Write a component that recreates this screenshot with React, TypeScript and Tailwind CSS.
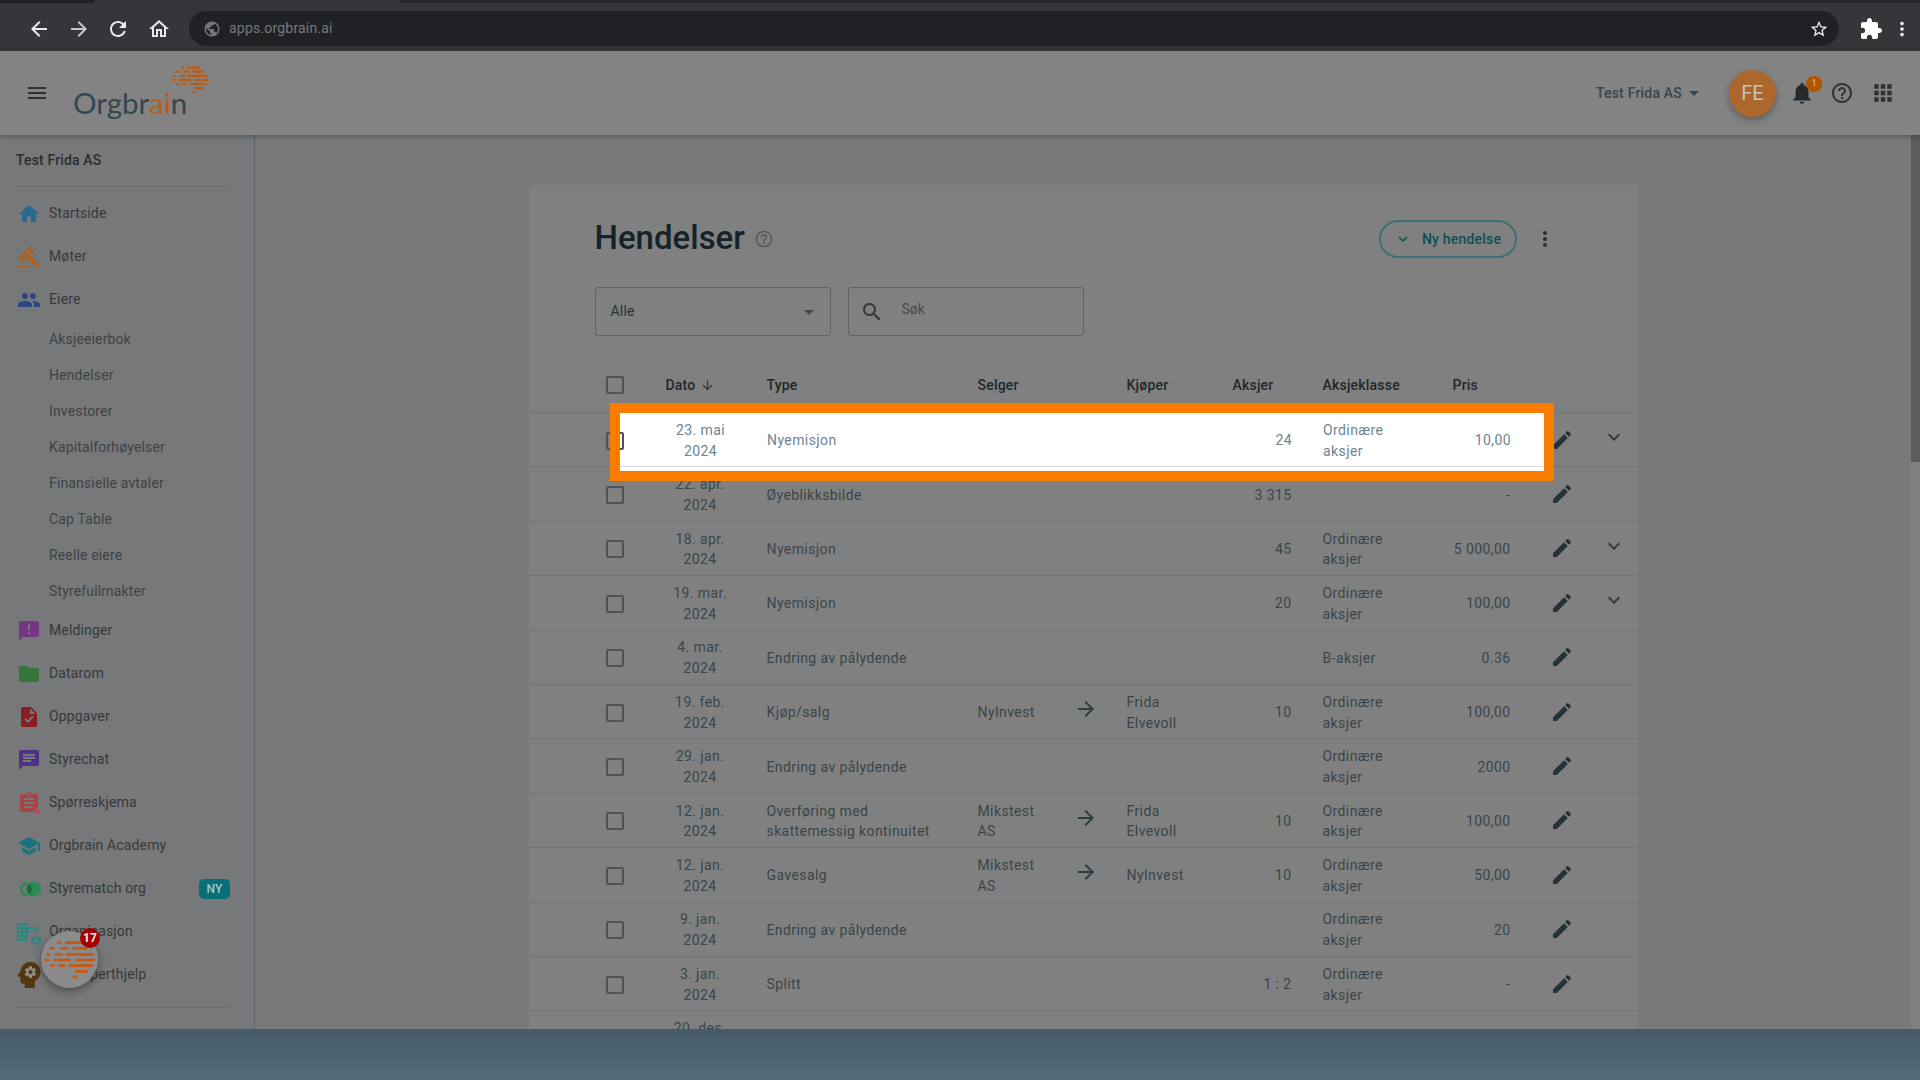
import React from "react";

const P = {
  back: "M20 11H7.83l5.59-5.59L12 4l-8 8 8 8 1.41-1.41L7.83 13H20v-2z",
  forward: "M12 4l-1.41 1.41L16.17 11H4v2h12.17l-5.58 5.59L12 20l8-8z",
  refresh: "M17.65 6.35C16.2 4.9 14.21 4 12 4c-4.42 0-7.99 3.58-7.99 8s3.57 8 7.99 8c3.73 0 6.84-2.55 7.73-6h-2.08c-.82 2.33-3.04 4-5.65 4-3.31 0-6-2.69-6-6s2.69-6 6-6c1.66 0 3.14.69 4.22 1.78L13 11h7V4l-2.35 2.35z",
  homeOutline: "M12 5.69l5 4.5V18h-2v-6H9v6H7v-7.81l5-4.5M12 3L2 12h3v8h6v-6h2v6h6v-8h3L12 3z",
  globe: "M12 2C6.48 2 2 6.48 2 12s4.48 10 10 10 10-4.48 10-10S17.52 2 12 2zm-1 17.93c-3.95-.49-7-3.85-7-7.93 0-.62.08-1.21.21-1.79L9 15v1c0 1.1.9 2 2 2v1.93zm6.9-2.54c-.26-.81-1-1.39-1.9-1.39h-1v-3c0-.55-.45-1-1-1H8v-2h2c.55 0 1-.45 1-1V7h2c1.1 0 2-.9 2-2v-.41c2.93 1.19 5 4.06 5 7.41 0 2.08-.8 3.97-2.1 5.39z",
  star: "M22 9.24l-7.19-.62L12 2 9.19 8.63 2 9.24l5.46 4.73L5.82 21 12 17.27 18.18 21l-1.63-7.03L22 9.24zM12 15.4l-3.76 2.27 1-4.28-3.32-2.88 4.38-.38L12 6.1l1.71 4.04 4.38.38-3.32 2.88 1 4.28L12 15.4z",
  ext: "M20.5 11H19V7c0-1.1-.9-2-2-2h-4V3.5C13 2.12 11.88 1 10.5 1S8 2.12 8 3.5V5H4c-1.1 0-1.99.9-1.99 2v3.8H3.5c1.49 0 2.7 1.21 2.7 2.7s-1.21 2.7-2.7 2.7H2V20c0 1.1.9 2 2 2h3.8v-1.5c0-1.49 1.21-2.7 2.7-2.7 1.49 0 2.7 1.21 2.7 2.7V22H17c1.1 0 2-.9 2-2v-4h1.5c1.38 0 2.5-1.12 2.5-2.5S21.88 11 20.5 11z",
  vert: "M12 8c1.1 0 2-.9 2-2s-.9-2-2-2-2 .9-2 2 .9 2 2 2zm0 2c-1.1 0-2 .9-2 2s.9 2 2 2 2-.9 2-2-.9-2-2-2zm0 6c-1.1 0-2 .9-2 2s.9 2 2 2 2-.9 2-2-.9-2-2-2z",
  menu: "M3 18h18v-2H3v2zm0-5h18v-2H3v2zm0-7v2h18V6H3z",
  drop: "M7 10l5 5 5-5z",
  bell: "M12 22c1.1 0 2-.9 2-2h-4c0 1.1.89 2 2 2zm6-6v-5c0-3.07-1.64-5.64-4.5-6.32V4c0-.83-.67-1.5-1.5-1.5s-1.5.67-1.5 1.5v.68C7.63 5.36 6 7.92 6 11v5l-2 2v1h16v-1l-2-2z",
  help: "M11 18h2v-2h-2v2zm1-16C6.48 2 2 6.48 2 12s4.48 10 10 10 10-4.48 10-10S17.52 2 12 2zm0 18c-4.41 0-8-3.59-8-8s3.59-8 8-8 8 3.59 8 8-3.59 8-8 8zm0-14c-2.21 0-4 1.79-4 4h2c0-1.1.9-2 2-2s2 .9 2 2c0 2-3 1.75-3 5h2c0-2.25 3-2.5 3-5 0-2.21-1.79-4-4-4z",
  apps: "M4 8h4V4H4v4zm6 12h4v-4h-4v4zm-6 0h4v-4H4v4zm0-6h4v-4H4v4zm6 0h4v-4h-4v4zm6-10v4h4V4h-4zm-6 4h4V4h-4v4zm6 6h4v-4h-4v4zm0 6h4v-4h-4v4z",
  home: "M10 20v-6h4v6h5v-8h3L12 3 2 12h3v8z",
  gavel: "M1 21h12v2H1v-2zM5.245 8.07l2.83-2.827 14.14 14.142-2.828 2.828L5.245 8.07zM12.317 1l5.657 5.656-2.83 2.83-5.654-5.66L12.317 1zM3.825 9.485l5.657 5.657-2.828 2.828-5.657-5.657 2.828-2.828z",
  people: "M16 11c1.66 0 2.99-1.34 2.99-3S17.66 5 16 5c-1.66 0-3 1.34-3 3s1.34 3 3 3zm-8 0c1.66 0 2.99-1.34 2.99-3S9.66 5 8 5C6.34 5 5 6.34 5 8s1.34 3 3 3zm0 2c-2.33 0-7 1.17-7 3.5V19h14v-2.5c0-2.33-4.67-3.5-7-3.5zm8 0c-.29 0-.62.02-.97.05 1.16.84 1.97 1.97 1.97 3.45V19h6v-2.5c0-2.33-4.67-3.5-7-3.5z",
  announce: "M20 2H4c-1.1 0-1.99.9-1.99 2L2 22l4-4h14c1.1 0 2-.9 2-2V4c0-1.1-.9-2-2-2zm-7 9h-2V5h2v6zm0 4h-2v-2h2v2z",
  folder: "M10 4H4c-1.1 0-1.99.9-1.99 2L2 18c0 1.1.9 2 2 2h16c1.1 0 2-.9 2-2V8c0-1.1-.9-2-2-2h-8l-2-2z",
  task: "M14 2H6c-1.1 0-1.99.9-1.99 2L4 20c0 1.1.89 2 1.99 2H18c1.1 0 2-.9 2-2V8l-6-6zm-3.06 16L7.4 14.46l1.41-1.41 2.12 2.12 4.24-4.24 1.41 1.41L10.94 18zM13 9V3.5L18.5 9H13z",
  chat: "M20 2H4c-1.1 0-1.99.9-1.99 2L2 22l4-4h14c1.1 0 2-.9 2-2V4c0-1.1-.9-2-2-2zM6 9h12v2H6V9zm8 5H6v-2h8v2zm4-6H6V6h12v2z",
  assign: "M19 3h-4.18C14.4 1.84 13.3 1 12 1c-1.3 0-2.4.84-2.82 2H5c-1.1 0-2 .9-2 2v14c0 1.1.9 2 2 2h14c1.1 0 2-.9 2-2V5c0-1.1-.9-2-2-2zm-7 0c.55 0 1 .45 1 1s-.45 1-1 1-1-.45-1-1 .45-1 1-1zm2 14H7v-2h7v2zm3-4H7v-2h10v2zm0-4H7V7h10v2z",
  school: "M5 13.18v4L12 21l7-3.82v-4L12 17l-7-3.82zM12 3L1 9l11 6 9-4.91V17h2V9L12 3z",
  domain: "M12 7V3H2v18h11v-2h-1v-2h1v-2h-1v-2h2V9h6v3h2V7H12zM6 19H4v-2h2v2zm0-4H4v-2h2v2zm0-4H4V9h2v2zm0-4H4V5h2v2zm4 12H8v-2h2v2zm0-4H8v-2h2v2zm0-4H8V9h2v2zm0-4H8V5h2v2z",
  gear: "M19.4 13c0-.3.1-.6.1-1s0-.7-.1-1l2.1-1.6c.2-.2.2-.4.1-.6l-2-3.5c-.1-.2-.4-.3-.6-.2l-2.5 1c-.5-.4-1.1-.7-1.7-1l-.4-2.6c0-.3-.2-.4-.5-.4h-4c-.3 0-.5.2-.5.4l-.4 2.6c-.6.3-1.2.6-1.7 1l-2.5-1c-.2-.1-.5 0-.6.2l-2 3.5c-.1.2-.1.5.1.6L4.6 11c0 .3-.1.6-.1 1s0 .7.1 1l-2.1 1.6c-.2.2-.2.4-.1.6l2 3.5c.1.2.4.3.6.2l2.5-1c.5.4 1.1.7 1.7 1l.4 2.6c0 .3.2.4.5.4h4c.3 0 .5-.2.5-.4l.4-2.6c.6-.3 1.2-.6 1.7-1l2.5 1c.2.1.5 0 .6-.2l2-3.5c.1-.2.1-.5-.1-.6L19.4 13zM12 15.5c-1.9 0-3.5-1.6-3.5-3.5s1.6-3.5 3.5-3.5 3.5 1.6 3.5 3.5-1.6 3.5-3.5 3.5z",
  head: "M13 3C9.25 3 6.2 5.94 6.02 9.64L4.1 12.2c-.25.33-.01.8.4.8H6v3c0 1.1.9 2 2 2h1v3h7v-4.68c2.36-1.12 4-3.53 4-6.32 0-3.87-3.13-7-7-7z",
  headGear: "M16 10c0 .13-.01.26-.02.39l.83.66c.08.06.1.16.05.25l-.8 1.39c-.05.09-.16.12-.24.09l-.99-.4c-.21.16-.43.29-.67.39L14 13.83c-.01.1-.1.17-.2.17h-1.6c-.1 0-.18-.07-.2-.17l-.15-1.06c-.25-.1-.47-.23-.68-.39l-.99.4c-.09.03-.2 0-.25-.09l-.8-1.39c-.05-.08-.03-.19.05-.25l.84-.66c-.01-.13-.02-.26-.02-.39s.02-.27.04-.39l-.85-.66c-.08-.06-.1-.16-.05-.26l.8-1.38c.05-.09.15-.12.24-.09l1 .4c.2-.15.43-.29.67-.39L12 6.17c.02-.1.1-.17.2-.17h1.6c.1 0 .18.07.2.17l.15 1.06c.24.1.46.23.67.39l1-.4c.09-.03.2 0 .24.09l.8 1.38c.05.09.03.2-.05.26l-.85.66c.03.12.04.25.04.39z",
  edit: "M3 17.25V21h3.75L17.81 9.94l-3.75-3.75L3 17.25zM20.71 7.04c.39-.39.39-1.02 0-1.41l-2.34-2.34c-.39-.39-1.02-.39-1.41 0l-1.83 1.83 3.75 3.75 1.83-1.83z",
  chevron: "M16.59 8.59L12 13.17 7.41 8.59 6 10l6 6 6-6z",
  down: "M20 12l-1.41-1.41L13 16.17V4h-2v12.17l-5.58-5.59L4 12l8 8 8-8z",
  search: "M15.5 14h-.79l-.28-.27C15.41 12.59 16 11.11 16 9.5 16 5.91 13.09 3 9.5 3S3 5.91 3 9.5 5.91 16 9.5 16c1.61 0 3.09-.59 4.23-1.57l.27.28v.79l5 4.99L20.49 19l-4.99-5zm-6 0C7.01 14 5 11.99 5 9.5S7.01 5 9.5 5 14 7.01 14 9.5 11.99 14 9.5 14z",
};

function Icon({ d, size = 24, className = "" }: { d: string; size?: number; className?: string }) {
  return (
    <svg width={size} height={size} viewBox="0 0 24 24" fill="currentColor" className={`shrink-0 ${className}`}>
      <path d={d} />
    </svg>
  );
}

const dashes: [number, number, number][] = [
  [1025, 170, 183], [1025, 195, 245],
  [1042, 148, 162], [1042, 180, 205], [1042, 217, 262],
  [1060, 138, 150], [1060, 165, 188], [1060, 198, 282],
  [1077, 133, 147], [1077, 160, 212], [1077, 225, 286],
  [1094, 150, 163], [1094, 175, 195], [1094, 207, 278],
  [1111, 225, 262],
  [1128, 218, 231],
];

function Brain({ className, fill, bar = 8 }: { className: string; fill: string; bar?: number }) {
  return (
    <svg viewBox="133 1020 153 114" className={className}>
      {dashes.map(([y, a, b]) => (
        <rect key={`${y}-${a}`} x={a} y={y - bar / 2} width={b - a} height={bar} rx={2} fill={fill} />
      ))}
    </svg>
  );
}

function ItemIcon({ name }: { name: string }) {
  const box = "w-6 h-6 shrink-0 relative";
  switch (name) {
    case "Startside": return <Icon d={P.home} className="text-[#27698f]" />;
    case "Møter": return <Icon d={P.gavel} className="text-[#b0601c]" />;
    case "Eiere": return <Icon d={P.people} className="text-[#2b4585]" />;
    case "Meldinger": return <Icon d={P.announce} className="text-[#763683]" />;
    case "Datarom": return <Icon d={P.folder} className="text-[#357538]" />;
    case "Oppgaver": return <Icon d={P.task} className="text-[#861e22]" />;
    case "Styrechat": return <Icon d={P.chat} className="text-[#4f3287]" />;
    case "Spørreskjema":
      return (
        <span className={box}>
          <Icon d={P.assign} className="text-[#a84347]" />
          <span className="absolute right-0 bottom-0 w-[7px] h-[7px] rounded-full bg-[#c2474c] border border-[#77797b]" />
        </span>
      );
    case "Orgbrain Academy": return <Icon d={P.school} className="text-[#1c727c]" />;
    case "Styrematch org":
      return (
        <svg width="26" height="24" viewBox="0 0 26 24" className="shrink-0 -ml-px -mr-px">
          <circle cx="17.5" cy="12" r="7.5" fill="#2a8a50" />
          <path d="M13 5.8 a6.2 6.2 0 1 0 0 12.4" fill="none" stroke="#2a8a50" strokeWidth="2.6" transform="translate(-1.5 0)" />
          <path d="M13.5 6.4a7.5 7.5 0 0 1 0 11.2a7.5 7.5 0 0 1 0-11.2z" fill="#1c6a48" />
        </svg>
      );
    case "Organisasjon":
      return (
        <span className={`${box} -translate-x-[2px]`}>
          <Icon d={P.domain} className="text-[#2c8780]" />
          <Icon d={P.gear} size={13} className="absolute -right-[4px] -bottom-[3px] text-[#2c8780]" />
        </span>
      );
    case "Få eksperthjelp":
      return (
        <svg width="24" height="26" viewBox="4 3 16 18" className="shrink-0">
          <path d={P.head} fill="#543610" />
          <path d={P.headGear} fill="#8c8c8c" />
          <circle cx="13" cy="10" r="1.4" fill="#543610" />
        </svg>
      );
    default: return null;
  }
}

function NavItem({ name, badge }: { name: string; badge?: string }) {
  return (
    <div className="h-[43px] flex items-center gap-2 pl-[17px] pr-[24px] text-[14px] tracking-[0.15px] text-[#36383a]">
      <ItemIcon name={name} />
      <span className="flex-1">{name}</span>
      {badge && (
        <span className="w-[31px] h-[20px] rounded-[5px] bg-[#086f78] text-[#a4c6ca] text-[12px] font-medium flex items-center justify-center">
          {badge}
        </span>
      )}
    </div>
  );
}

function Sidebar() {
  const top = ["Startside", "Møter", "Eiere"];
  const subs = ["Aksjeeierbok", "Hendelser", "Investorer", "Kapitalforhøyelser", "Finansielle avtaler", "Cap Table", "Reelle eiere", "Styrefullmakter"];
  const rest = ["Meldinger", "Datarom", "Oppgaver", "Styrechat", "Spørreskjema", "Orgbrain Academy"];
  const tail = ["Organisasjon", "Få eksperthjelp"];
  return (
    <aside className="w-[255px] shrink-0 h-full bg-[#76787a] border-r border-[#59666b] overflow-hidden">
      <div className="h-[52px] ml-4 mr-[24px] pb-[1px] flex items-center text-[14px] tracking-[0.15px] font-medium text-[#2b2d2f] border-b border-[#6b6d6f]">Test Frida AS</div>
      <div className="h-[5px]" />
      {top.map((n) => <NavItem key={n} name={n} />)}
      {subs.map((n) => (
        <div key={n} className="h-[36px] flex items-center pl-[49px] text-[14px] tracking-[0.15px] text-[#404346]">{n}</div>
      ))}
      {rest.map((n) => <NavItem key={n} name={n} />)}
      <NavItem name="Styrematch org" badge="NY" />
      {tail.map((n) => <NavItem key={n} name={n} />)}
      <div className="ml-4 mr-[24px] mt-[11px] border-b border-[#6b6d6f]" />
    </aside>
  );
}

type Row = {
  date: string; type?: string; seller?: string; buyer?: string; shares?: string;
  cls?: string; price?: string; chevron?: boolean; noEdit?: boolean;
};

const ORD = "Ordinære\naksjer";
const rows: Row[] = [
  { date: "23. mai\n2024", type: "Nyemisjon", shares: "24", cls: ORD, price: "10,00", chevron: true },
  { date: "22. apr.\n2024", type: "Øyeblikksbilde", shares: "3 315", price: "-" },
  { date: "18. apr.\n2024", type: "Nyemisjon", shares: "45", cls: ORD, price: "5 000,00", chevron: true },
  { date: "19. mar.\n2024", type: "Nyemisjon", shares: "20", cls: ORD, price: "100,00", chevron: true },
  { date: "4. mar.\n2024", type: "Endring av pålydende", cls: "B-aksjer", price: "0.36" },
  { date: "19. feb.\n2024", type: "Kjøp/salg", seller: "NyInvest", buyer: "Frida\nElvevoll", shares: "10", cls: ORD, price: "100,00" },
  { date: "29. jan.\n2024", type: "Endring av pålydende", cls: ORD, price: "2000" },
  { date: "12. jan.\n2024", type: "Overføring med\nskattemessig kontinuitet", seller: "Mikstest\nAS", buyer: "Frida\nElvevoll", shares: "10", cls: ORD, price: "100,00" },
  { date: "12. jan.\n2024", type: "Gavesalg", seller: "Mikstest\nAS", buyer: "NyInvest", shares: "10", cls: ORD, price: "50,00" },
  { date: "9. jan.\n2024", type: "Endring av pålydende", cls: ORD, price: "20" },
  { date: "3. jan.\n2024", type: "Splitt", shares: "1 : 2", cls: ORD, price: "-" },
  { date: "20. des.\n2023", noEdit: true },
];

const GRID = "grid grid-cols-[121px_117px_211px_96px_53px_106px_59px_31px_130px_58px_77px_50px] items-center";

function TableRow({ r, bright, blank }: { r: Row; bright?: boolean; blank?: boolean }) {
  const text = bright ? "text-[#6d8492]" : "text-[#3a454b]";
  const line = bright ? "border-[#dcdcdc]" : "border-[#747474]";
  return (
    <div className={`${GRID} h-[54.4px] pt-[2px] w-[1109px] shrink-0 border-b ${line} text-[14px] leading-[20.8px] tracking-[0.4px] whitespace-pre-line ${text}`}>
      <div className="pl-[77px]">
        {!r.noEdit && <div className="w-[18px] h-[18px] border-2 border-[#4f5254] rounded-[2px]" />}
      </div>
      <div className="pr-[16px] text-center">{!blank && r.date}</div>
      <div>{!blank && r.type}</div>
      <div>{!blank && r.seller}</div>
      <div className="-mt-[7px]">{r.seller && <Icon d={P.forward} className="text-[#2f3c42]" />}</div>
      <div>{!blank && r.buyer}</div>
      <div className="text-right whitespace-nowrap">{!blank && r.shares}</div>
      <div />
      <div>{!blank && r.cls}</div>
      <div className="text-right whitespace-nowrap">{!blank && r.price}</div>
      <div className="pl-[39px] -mt-[2px]">{!r.noEdit && <Icon d={P.edit} className="text-[#25323a]" />}</div>
      <div className="pl-[14px] -mt-[7px]">{r.chevron && <Icon d={P.chevron} className="text-[#2f3c42]" />}</div>
    </div>
  );
}

function Card() {
  const head = "text-[14px] font-medium tracking-[0.2px] text-[#20282c]";
  return (
    <section className="w-[1109px] mx-auto bg-[#808080] rounded-t-[4px]">
      <div className="pt-[35px] pl-[66px] pr-[81px] flex items-center h-[73px]">
        <h1 className="text-[33px] font-medium leading-[38px] -mt-[2px] text-[#14222a]">Hendelser</h1>
        <Icon d={P.help} size={20} className="ml-[9px] text-[#55595c]" />
        <div className="flex-1" />
        <button className="w-[138px] h-[38px] rounded-full border-2 border-[#3f6f76] flex items-center justify-center gap-[10px] text-[14px] font-medium tracking-[0.2px] text-[#0b4f55]">
          <Icon d={P.chevron} size={18} className="text-[#0b4f55]" />
          Ny hendelse
        </button>
        <Icon d={P.vert} className="ml-[16px] text-[#2c3134]" />
      </div>
      <div className="mt-[29px] pl-[66px] flex gap-[17px]">
        <div className="w-[236px] h-[49px] border border-[#5f6264] rounded-[3px] pl-[15px] pr-[9px] flex items-center justify-between text-[14px] tracking-[0.2px] text-[#2e3234]">
          Alle
          <Icon d={P.drop} className="text-[#45494c]" />
        </div>
        <div className="w-[236px] h-[49px] border border-[#5f6264] rounded-[3px] pl-[11px] flex items-center gap-[18px] text-[14px] text-[#474b4e]">
          <Icon d={P.search} className="text-[#33373a]" />
          <span className="-mt-[4px]">Søk</span>
        </div>
      </div>
      <div className={`${GRID} h-[77px] pt-[22px] border-b border-[#747474] ${head}`}>
        <div className="pl-[77px]"><div className="w-[18px] h-[18px] border-2 border-[#4f5254] rounded-[2px]" /></div>
        <div className="pl-4 flex items-center gap-[5px]">Dato <Icon d={P.down} size={15} className="text-[#33393c]" /></div>
        <div>Type</div>
        <div>Selger</div>
        <div />
        <div>Kjøper</div>
        <div>Aksjer</div>
        <div />
        <div>Aksjeklasse</div>
        <div>Pris</div>
        <div />
        <div />
      </div>
      {rows.map((r, i) => <TableRow key={i} r={r} blank={i === 0} />)}
    </section>
  );
}

function BrowserChrome() {
  return (
    <div className="h-[51px] bg-[#35363a] shrink-0">
      <div className="h-[3px] flex">
        <div className="w-[95px] bg-[#202124] rounded-br-md" />
        <div className="w-[305px]" />
        <div className="flex-1 bg-[#26272a]" />
      </div>
      <div className="h-[48px] pt-[3px] flex items-center pl-[27px] pr-[6px] text-white">
        <Icon d={P.back} className="text-[#e8eaed]" />
        <Icon d={P.forward} className="ml-[16px] text-[#c4c6c9]" />
        <Icon d={P.refresh} className="ml-[15px] text-[#e8eaed]" />
        <Icon d={P.homeOutline} className="ml-[17px] text-[#e8eaed]" />
        <div className="ml-[18px] w-[1650px] h-[35px] rounded-full bg-[#202124] flex items-center pl-[14px] pr-[10px]">
          <Icon d={P.globe} size={18} className="text-[#75777b]" />
          <span className="ml-[8px] flex-1 text-[14px] tracking-[0.2px] text-[#77797d]">apps.orgbrain.ai</span>
          <Icon d={P.star} size={20} className="text-[#e8eaed]" />
        </div>
        <Icon d={P.ext} className="ml-[20px] text-white" />
        <Icon d={P.vert} size={22} className="ml-[8px] text-[#e8eaed]" />
      </div>
    </div>
  );
}

function AppHeader() {
  return (
    <header className="relative z-10 h-[84px] shrink-0 bg-[#838383] shadow-[0_2px_5px_rgba(0,0,0,0.25)] flex items-center pl-[25px] pr-[24px]">
      <Icon d={P.menu} className="text-[#2b3134]" />
      <div className="relative ml-[25px] w-[140px] h-[84px]">
        <Brain className="absolute left-[98px] top-[15px] w-[37px] h-[28px]" fill="#b85c18" bar={10} />
        <span className="absolute -left-[1px] top-[32px] text-[29.5px] leading-[40px] font-['Lato',sans-serif] font-normal text-[#33474f]">
          Orgbr<span className="text-[#b85c18]">ai</span>n
        </span>
      </div>
      <div className="flex-1" />
      <span className="text-[14px] font-medium tracking-[0.2px] text-[#36464e]">Test Frida AS</span>
      <Icon d={P.drop} className="text-[#36464e]" />
      <div className="ml-[23px] w-[47px] h-[47px] rounded-full bg-[#ac672d] text-[#c9c2ba] text-[20px] flex items-center justify-center shadow-[0_3px_6px_rgba(0,0,0,0.3)]">FE</div>
      <div className="relative ml-[13px]">
        <Icon d={P.bell} size={26} className="text-[#23292d]" />
        <span className="absolute -top-[4px] -right-[7px] w-4 h-4 rounded-full bg-[#b35400] text-[#d8c9bb] text-[9px] flex items-center justify-center">1</span>
      </div>
      <Icon d={P.help} size={24} className="ml-[15px] text-[#2c3236]" />
      <Icon d={P.apps} size={26} className="ml-[16px] text-[#2b3134]" />
    </header>
  );
}

export default function App() {
  return (
    <div className="relative w-[1920px] h-[1080px] overflow-hidden flex flex-col font-['Roboto',sans-serif]">
      <BrowserChrome />
      <AppHeader />
      <div className="h-[894px] shrink-0 flex overflow-hidden bg-[#78797b]">
        <Sidebar />
        <main className="flex-1 pt-[50px] overflow-hidden">
          <Card />
        </main>
        <div className="w-[9px] shrink-0 bg-[#808082]">
          <div className="h-[327px] bg-[#5c5c5c]" />
        </div>
      </div>
      <div className="flex-1 bg-gradient-to-b from-[#465b68] to-[#536c7a]" />

      {/* Tour highlight over the first row */}
      <div className="absolute z-20 left-[610px] top-[403px] w-[944px] h-[78px] border-[10px] border-[#fa7d00] bg-white overflow-hidden">
        <div className="-ml-[91px]">
          <TableRow r={rows[0]} bright />
        </div>
      </div>

      {/* Floating help bubble */}
      <div className="absolute z-20 left-[41px] top-[931px] w-[57px] h-[57px] rounded-full bg-[#8b8b8b] shadow-[0_3px_8px_rgba(0,0,0,0.4)] flex items-center justify-center">
        <Brain className="w-[52px] h-[38px]" fill="#c9570f" />
        <span className="absolute -top-[3px] -right-[2px] w-5 h-5 rounded-full bg-[#a30000] text-[#eee] text-[12px] font-bold flex items-center justify-center">17</span>
      </div>
    </div>
  );
}
